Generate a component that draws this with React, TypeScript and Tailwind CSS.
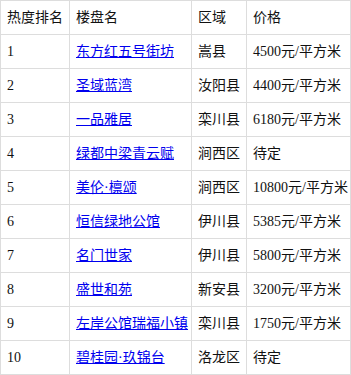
import React from "react";

const rows: [string, string, string, string][] = [
  ["1", "东方红五号街坊", "嵩县", "4500元/平方米"],
  ["2", "圣域蓝湾", "汝阳县", "4400元/平方米"],
  ["3", "一品雅居", "栾川县", "6180元/平方米"],
  ["4", "绿都中梁青云赋", "涧西区", "待定"],
  ["5", "美伦·檩颂", "涧西区", "10800元/平方米"],
  ["6", "恒信绿地公馆", "伊川县", "5385元/平方米"],
  ["7", "名门世家", "伊川县", "5800元/平方米"],
  ["8", "盛世和苑", "新安县", "3200元/平方米"],
  ["9", "左岸公馆瑞福小镇", "栾川县", "1750元/平方米"],
  ["10", "碧桂园·玖锦台", "洛龙区", "待定"],
];

const cell = "border border-[#dddddd] px-[6px] h-[34px] p-0 align-middle whitespace-nowrap overflow-hidden";

export default function App() {
  return (
    <div
      className="bg-white text-[14px] text-[#111]"
      style={{ fontFamily: '"Liberation Serif", "Noto Sans CJK SC", serif' }}
    >
      <table className="table-fixed border-collapse w-[350px]">
        <colgroup>
          <col className="w-[69px]" />
          <col className="w-[122px]" />
          <col className="w-[55px]" />
          <col className="w-[104px]" />
        </colgroup>
        <thead>
          <tr>
            <th className={cell + " text-left font-normal"}>热度排名</th>
            <th className={cell + " text-left font-normal"}>楼盘名</th>
            <th className={cell + " text-left font-normal"}>区域</th>
            <th className={cell + " text-left font-normal"}>价格</th>
          </tr>
        </thead>
        <tbody>
          {rows.map((r) => (
            <tr key={r[0]}>
              <td className={cell}>{r[0]}</td>
              <td className={cell}>
                <a href="#" className="text-[#0000ee] underline">
                  {r[1]}
                </a>
              </td>
              <td className={cell}>{r[2]}</td>
              <td className={cell}>{r[3]}</td>
            </tr>
          ))}
        </tbody>
      </table>
    </div>
  );
}
